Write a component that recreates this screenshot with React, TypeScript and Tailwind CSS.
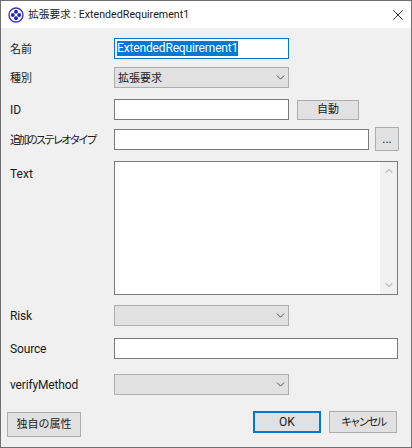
import { ChevronDown, ChevronUp, X } from 'lucide-react'

const FONT = "font-['Roboto','Noto_Sans_CJK_JP',sans-serif]"

function Label({ children, className }: { children: string; className: string }) {
    return <span className={`w-[113px] shrink-0 whitespace-nowrap pl-[9px] leading-[16px] text-[#1a1a1a] ${className}`}>{children}</span>
}

function Combo({ value }: { value?: string }) {
    return (
        <div className="flex h-[21px] w-[175px] items-center justify-between border border-[#adadad] bg-[#e1e1e1] pl-[3px] pr-[1px] text-[11px] text-[#1a1a1a]">
            <span className="pt-[3px]">{value}</span>
            <ChevronDown className="h-[13px] w-[13px] text-[#505050]" strokeWidth={1.8} />
        </div>
    )
}

function Button({ children, className }: { children: string; className: string }) {
    return (
        <button className={`flex items-center justify-center whitespace-nowrap border border-[#adadad] bg-[#e1e1e1] text-[#1a1a1a] ${className}`}>
            {children}
        </button>
    )
}

function LogoIcon() {
    return (
        <svg width="16" height="16" viewBox="0 0 16 16">
            <circle cx="8" cy="8" r="7" fill="#ffffff" stroke="#3a32c8" strokeWidth="1.4" />
            <circle cx="8" cy="4.8" r="2" fill="#2a26c0" />
            <circle cx="8" cy="11.2" r="2" fill="#2a26c0" />
            <circle cx="4.8" cy="8" r="2" fill="#2a26c0" />
            <circle cx="11.2" cy="8" r="2" fill="#2a26c0" />
        </svg>
    )
}

export default function App() {
    return (
        <div className={`flex h-[448px] w-[412px] flex-col border border-[#6f6f6f] bg-[#f0f0f0] ${FONT}`}>
            {/* Title bar */}
            <div className="flex h-[27px] shrink-0 items-center bg-white pl-[7px] pr-[4px]">
                <LogoIcon />
                <span className="ml-[4px] pt-[2px] text-[10.7px] text-[#1a1a1a]">拡張要求 : ExtendedRequirement1</span>
                <X className="ml-auto h-[18px] w-[18px] text-[#222222]" strokeWidth={1.2} />
            </div>

            <div className="flex flex-1 flex-col pr-[12px]">
                <div className="mt-[10px] flex h-[21px] items-center">
                    <Label className="pt-[3px] text-[11px]">名前</Label>
                    <div className="flex h-full w-[175px] items-center border border-[#0078d7] bg-white pl-[2px] text-[12px] tracking-[-0.15px]">
                        <span className="bg-[#0078d7] leading-[15px] text-white">ExtendedRequirement1</span>
                    </div>
                </div>
                <div className="mt-[8px] flex h-[21px] items-center">
                    <Label className="pt-[3px] text-[11px]">種別</Label>
                    <Combo value="拡張要求" />
                </div>
                <div className="mt-[11px] flex h-[21px] items-center">
                    <Label className="text-[12px]">ID</Label>
                    <div className="h-full w-[175px] border border-[#7a7a7a] bg-white" />
                    <Button className="ml-[8px] h-[20px] w-[62px] pt-[1px] text-[11px]">自動</Button>
                </div>
                <div className="mt-[9px] flex h-[21px] items-center">
                    <Label className="pt-[3px] text-[11px] tracking-[-2.5px]">追加のステレオタイプ</Label>
                    <div className="h-full w-[256px] border border-[#7a7a7a] bg-white" />
                    <Button className="ml-[6px] h-[24px] w-[24px] -translate-y-[1px] text-[12px]">...</Button>
                </div>
                <div className="mt-[11px] flex h-[134px] items-start">
                    <div className="mt-[5px] flex"><Label className="text-[12px]">Text</Label></div>
                    <div className="flex h-full w-[284px] justify-end border border-[#7a7a7a] bg-white">
                        <div className="flex w-[17px] flex-col items-center justify-between bg-[#f0f0f0] py-[3px]">
                            <ChevronUp className="h-[12px] w-[12px] text-[#bcbcbc]" strokeWidth={2.2} />
                            <ChevronDown className="h-[12px] w-[12px] text-[#bcbcbc]" strokeWidth={2.2} />
                        </div>
                    </div>
                </div>
                <div className="mt-[10px] flex h-[21px] items-center">
                    <Label className="text-[12px] tracking-[-0.15px]">Risk</Label>
                    <Combo />
                </div>
                <div className="mt-[12px] flex h-[21px] items-center">
                    <Label className="text-[12px] tracking-[-0.15px]">Source</Label>
                    <div className="h-full w-[284px] border border-[#7a7a7a] bg-white" />
                </div>
                <div className="mt-[15px] flex h-[21px] items-center">
                    <Label className="text-[12px] tracking-[-0.15px]">verifyMethod</Label>
                    <Combo />
                </div>
                <div className="mt-[16px] flex items-start justify-between pl-[6px]">
                    <Button className="mt-[1px] h-[25px] w-[74px] pt-[2px] text-[11px]">独自の属性</Button>
                    <div className="flex gap-[8px] pr-[2px]">
                        <button className="flex h-[22px] w-[68px] items-center justify-center border-2 border-[#0078d7] bg-[#e1e1e1] text-[12px] text-[#1a1a1a]">OK</button>
                        <Button className="h-[22px] w-[68px] pt-[2px] text-[11px] tracking-[-2.2px]">キャンセル</Button>
                    </div>
                </div>
            </div>
        </div>
    )
}
